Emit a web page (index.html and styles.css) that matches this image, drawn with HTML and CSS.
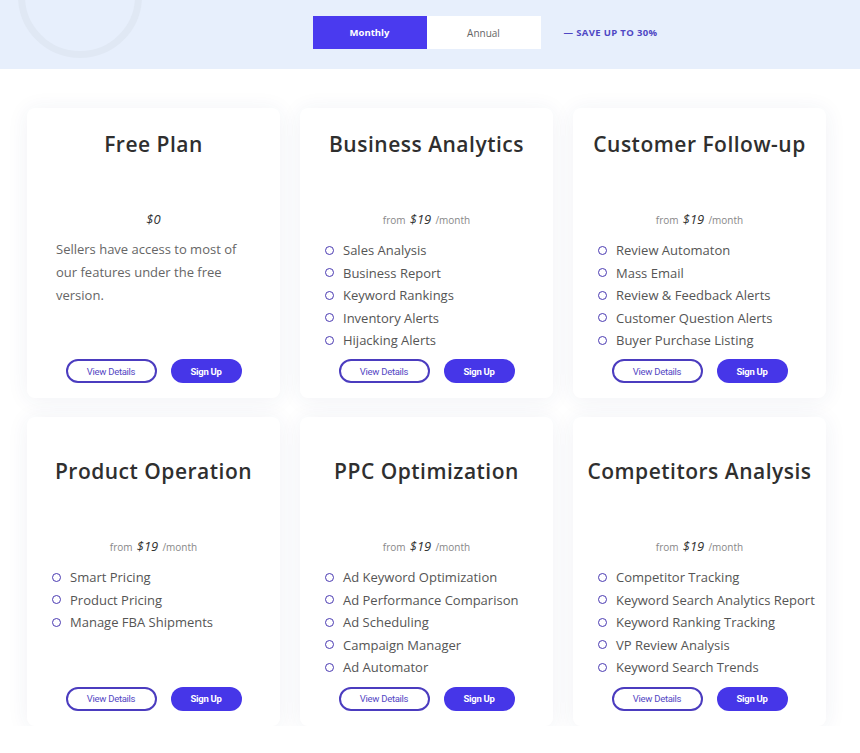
FILE: index.html
```html
<!DOCTYPE html>
<html lang="en">
<head>
<meta charset="utf-8">
<title>Pricing</title>
<link rel="stylesheet" href="styles.css">
</head>
<body>
<header class="band">
  <div class="ring"></div>
  <div class="band-inner">
    <div class="spacer"></div>
    <div class="toggle">
      <button class="tab tab-active">Monthly</button>
      <button class="tab">Annual</button>
    </div>
    <div class="save">— SAVE UP TO 30%</div>
  </div>
</header>

<main class="plans">
  <section class="card card-top">
    <h2 class="title">Free Plan</h2>
    <div class="price"><span class="amount">$0</span></div>
    <p class="desc">Sellers have access to most of our features under the free version.</p>
    <div class="actions"><a class="btn btn-outline">View Details</a><a class="btn btn-fill">Sign Up</a></div>
  </section>

  <section class="card card-top">
    <h2 class="title">Business Analytics</h2>
    <div class="price"><span class="small">from</span> <span class="amount">$19</span> <span class="small">/month</span></div>
    <ul class="features">
      <li>Sales Analysis</li>
      <li>Business Report</li>
      <li>Keyword Rankings</li>
      <li>Inventory Alerts</li>
      <li>Hijacking Alerts</li>
    </ul>
    <div class="actions"><a class="btn btn-outline">View Details</a><a class="btn btn-fill">Sign Up</a></div>
  </section>

  <section class="card card-top">
    <h2 class="title">Customer Follow-up</h2>
    <div class="price"><span class="small">from</span> <span class="amount">$19</span> <span class="small">/month</span></div>
    <ul class="features">
      <li>Review Automaton</li>
      <li>Mass Email</li>
      <li>Review &amp; Feedback Alerts</li>
      <li>Customer Question Alerts</li>
      <li>Buyer Purchase Listing</li>
    </ul>
    <div class="actions"><a class="btn btn-outline">View Details</a><a class="btn btn-fill">Sign Up</a></div>
  </section>

  <section class="card card-bottom">
    <h2 class="title">Product Operation</h2>
    <div class="price"><span class="small">from</span> <span class="amount">$19</span> <span class="small">/month</span></div>
    <ul class="features">
      <li>Smart Pricing</li>
      <li>Product Pricing</li>
      <li>Manage FBA Shipments</li>
    </ul>
    <div class="actions"><a class="btn btn-outline">View Details</a><a class="btn btn-fill">Sign Up</a></div>
  </section>

  <section class="card card-bottom">
    <h2 class="title">PPC Optimization</h2>
    <div class="price"><span class="small">from</span> <span class="amount">$19</span> <span class="small">/month</span></div>
    <ul class="features">
      <li>Ad Keyword Optimization</li>
      <li>Ad Performance Comparison</li>
      <li>Ad Scheduling</li>
      <li>Campaign Manager</li>
      <li>Ad Automator</li>
    </ul>
    <div class="actions"><a class="btn btn-outline">View Details</a><a class="btn btn-fill">Sign Up</a></div>
  </section>

  <section class="card card-bottom">
    <h2 class="title">Competitors Analysis</h2>
    <div class="price"><span class="small">from</span> <span class="amount">$19</span> <span class="small">/month</span></div>
    <ul class="features">
      <li>Competitor Tracking</li>
      <li>Keyword Search Analytics Report</li>
      <li>Keyword Ranking Tracking</li>
      <li>VP Review Analysis</li>
      <li>Keyword Search Trends</li>
    </ul>
    <div class="actions"><a class="btn btn-outline">View Details</a><a class="btn btn-fill">Sign Up</a></div>
  </section>
</main>
</body>
</html>
```

FILE: styles.css
```css
* { box-sizing: border-box; }

body {
  margin: 0;
  background: #ffffff;
  font-family: "Open Sans", "DejaVu Sans", sans-serif;
  color: #333333;
}

.band {
  position: relative;
  height: 69px;
  background: #e7effc;
  overflow: hidden;
}

.ring {
  position: absolute;
  left: 18px;
  top: -66px;
  width: 124px;
  height: 124px;
  border: 7px solid #e0e8f4;
  border-radius: 50%;
}

.band-inner {
  position: relative;
  margin-left: 27px;
  width: 799px;
  padding-top: 16px;
  display: grid;
  grid-template-columns: 1fr auto 1fr;
  align-items: center;
}

.toggle {
  display: flex;
}

.tab {
  width: 114px;
  height: 33px;
  border: 0;
  margin: 0;
  padding: 0;
  background: #ffffff;
  color: #666666;
  font-family: "Open Sans", sans-serif;
  font-size: 10px;
  cursor: pointer;
}

.tab-active {
  background: #4a3aef;
  color: #ffffff;
  font-weight: 700;
  font-size: 9.5px;
}

.save {
  padding-left: 23px;
  font-size: 9.5px;
  font-weight: 700;
  color: #4f47c4;
  letter-spacing: 0.35px;
}

.plans {
  margin-left: 27px;
  width: 799px;
  padding-top: 39px;
  display: grid;
  grid-template-columns: repeat(3, 253px);
  column-gap: 20px;
  row-gap: 19px;
}

.card {
  background: #ffffff;
  border-radius: 8px;
  box-shadow: 0 2px 22px rgba(40, 60, 110, 0.07);
  padding: 24px 25px 15px 25px;
  display: flex;
  flex-direction: column;
}

.card-bottom {
  padding-top: 42px;
}

.title {
  margin: 0 -20px;
  font-size: 21px;
  line-height: 24px;
  font-weight: 600;
  text-align: center;
  color: #2f2f2f;
  letter-spacing: 0.5px;
  white-space: nowrap;
}

.price {
  margin-top: 54px;
  height: 16px;
  line-height: 16px;
  text-align: center;
  color: #333333;
}

.amount {
  font-size: 13px;
  font-style: italic;
  color: #333333;
}

.small {
  font-size: 10px;
  color: #888888;
}

.desc {
  margin: 12px 0 0 0;
  padding-left: 4px;
  max-width: 200px;
  font-size: 13px;
  line-height: 23px;
  color: #666666;
}

.features {
  list-style: none;
  margin: 12.75px 0 0 0;
  padding: 0;
}

.features li {
  display: flex;
  align-items: center;
  height: 22.5px;
  font-size: 13px;
  color: #555555;
  white-space: nowrap;
}

.features li::before {
  content: "";
  flex: none;
  width: 7px;
  height: 7px;
  margin-right: 9px;
  border: 1.5px solid #4a3ab2;
  border-radius: 50%;
}

.actions {
  margin-top: auto;
  display: flex;
  justify-content: center;
  gap: 14px;
  padding-top: 8px;
}

.btn {
  display: flex;
  align-items: center;
  justify-content: center;
  height: 24px;
  border-radius: 12px;
  font-family: "Roboto", "Liberation Sans", sans-serif;
  font-size: 9.5px;
  letter-spacing: -0.3px;
  cursor: pointer;
}

.btn-outline {
  width: 91px;
  border: 2px solid #4b3cbf;
  color: #5447c4;
}

.btn-fill {
  width: 71px;
  background: #4636e8;
  color: #ffffff;
  font-weight: 700;
}
```
